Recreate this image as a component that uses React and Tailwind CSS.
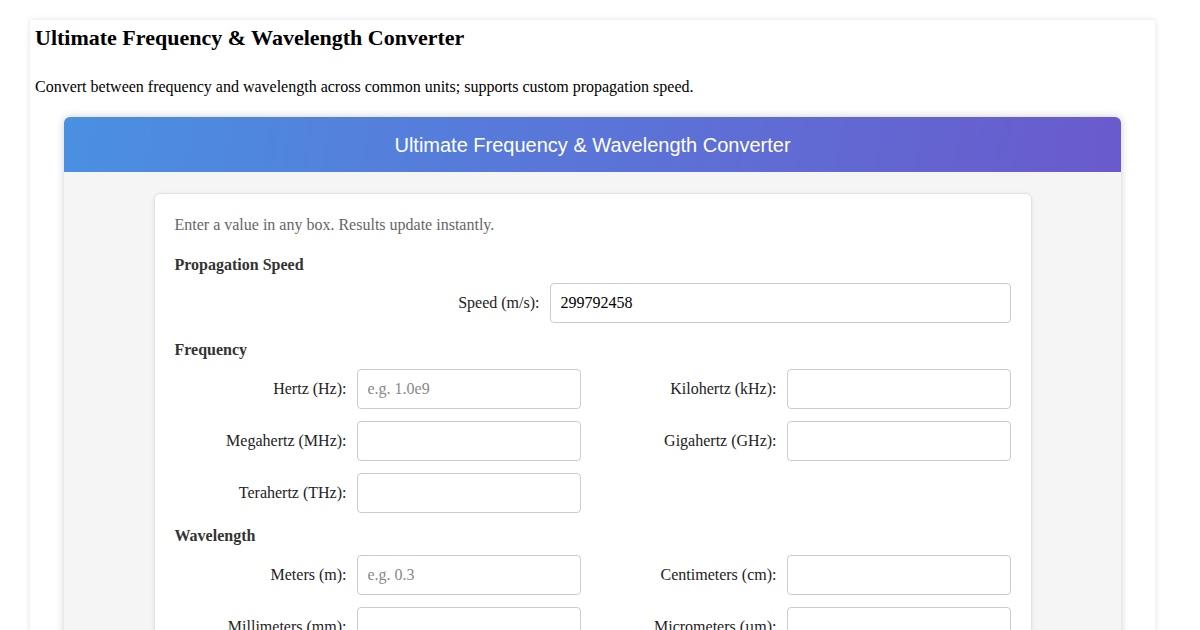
import React from "react";

const Field = ({ label, placeholder = "", value }) => (
  <div className="flex items-center">
    <label className="flex-1 text-right pr-[10px] text-[16px] text-[#222]">{label}</label>
    <input
      type="text"
      placeholder={placeholder}
      defaultValue={value}
      className="w-[224px] h-[40px] px-[10px] border border-[#ccc] rounded-[4px] bg-white text-[16px] font-[Liberation_Serif,serif] placeholder:text-[#888] outline-none"
    />
  </div>
);

const Section = ({ title, children }) => (
  <div className="mb-[14px]">
    <h3 className="font-bold text-[16px] leading-[18px] text-[#333] mb-[10px]">{title}</h3>
    <div className="grid grid-cols-2 gap-x-[24px] gap-y-[12px]">{children}</div>
  </div>
);

export default function App() {
  return (
    <div className="h-screen overflow-y-scroll bg-white font-[Liberation_Serif,serif] text-black">
      <div className="min-h-[1400px] pt-[20px]">
        <div className="ml-[30px] w-[1125px] bg-white shadow-[0_0_6px_rgba(0,0,0,0.12)] px-[5px] pb-[40px]">
          <h1 className="text-[22px] font-bold leading-[36px]">Ultimate Frequency &amp; Wavelength Converter</h1>
          <p className="text-[16px] mt-[22px] mb-[21px] leading-[18px]">
            Convert between frequency and wavelength across common units; supports custom propagation speed.
          </p>
          <div className="mx-[29px] rounded-[6px] overflow-hidden shadow-[0_0_8px_rgba(0,0,0,0.2)] bg-[#f5f5f5]">
            <div className="h-[55px] flex items-center justify-center bg-[linear-gradient(100deg,#4a90e2,#6a5acd)] text-white text-[20px] font-[Liberation_Sans,sans-serif]">
              Ultimate Frequency &amp; Wavelength Converter
            </div>
            <div className="py-[21px]">
              <div className="mx-auto w-[878px] bg-white rounded-[6px] border border-[#e2e2e2] shadow-[0_1px_4px_rgba(0,0,0,0.08)] px-[20px] pt-[21px] pb-[20px]">
                <p className="text-[16px] leading-[20px] text-[#666] mb-[21px]">Enter a value in any box. Results update instantly.</p>
                <h3 className="font-bold text-[16px] leading-[18px] text-[#333] mb-[9px]">Propagation Speed</h3>
                <div className="flex items-center mb-[18px]">
                  <label className="flex-1 text-right pr-[10px] text-[16px] text-[#222]">Speed (m/s):</label>
                  <input
                    type="text"
                    defaultValue="299792458"
                    className="w-[461px] h-[40px] px-[10px] border border-[#ccc] rounded-[4px] text-[16px] font-[Liberation_Serif,serif] outline-none"
                  />
                </div>
                <Section title="Frequency">
                  <Field label="Hertz (Hz):" placeholder="e.g. 1.0e9" />
                  <Field label="Kilohertz (kHz):" />
                  <Field label="Megahertz (MHz):" />
                  <Field label="Gigahertz (GHz):" />
                  <Field label="Terahertz (THz):" />
                </Section>
                <Section title="Wavelength">
                  <Field label="Meters (m):" placeholder="e.g. 0.3" />
                  <Field label="Centimeters (cm):" />
                  <Field label="Millimeters (mm):" />
                  <Field label="Micrometers (µm):" />
                  <Field label="Nanometers (nm):" />
                  <Field label="Kilometers (km):" />
                </Section>
              </div>
            </div>
          </div>
        </div>
      </div>
    </div>
  );
}
